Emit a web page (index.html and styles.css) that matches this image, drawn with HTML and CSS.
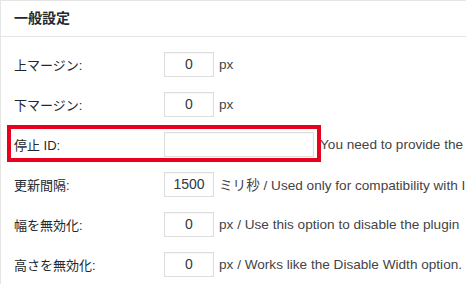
FILE: index.html
```html
<!DOCTYPE html>
<html lang="ja">
<head>
    <meta charset="UTF-8">
    <meta name="viewport" content="width=device-width, initial-scale=1.0">
    <title>一般設定</title>
    <link rel="stylesheet" href="styles.css">
</head>
<body>

<div class="postbox">
    <h2 class="postbox-title">一般設定</h2>

    <div class="form-table">
        <div class="form-row">
            <label class="form-label" for="marginTop">上マージン:</label>
            <input type="text" class="small-text" id="marginTop" value="0">
            <span class="description">px</span>
        </div>

        <div class="form-row">
            <label class="form-label" for="marginBottom">下マージン:</label>
            <input type="text" class="small-text" id="marginBottom" value="0">
            <span class="description">px</span>
        </div>

        <!-- Highlighted row -->
        <div class="form-row highlight">
            <label class="form-label" for="stopId">停止 ID:</label>
            <input type="text" class="regular-text" id="stopId" value="">
            <span class="description">You need to provide the</span>
        </div>

        <div class="form-row">
            <label class="form-label" for="interval">更新間隔:</label>
            <input type="text" class="small-text" id="interval" value="1500">
            <span class="description">ミリ秒 / Used only for compatibility with IE</span>
        </div>

        <div class="form-row">
            <label class="form-label" for="disableWidth">幅を無効化:</label>
            <input type="text" class="small-text" id="disableWidth" value="0">
            <span class="description">px / Use this option to disable the plugin</span>
        </div>

        <div class="form-row">
            <label class="form-label" for="disableHeight">高さを無効化:</label>
            <input type="text" class="small-text" id="disableHeight" value="0">
            <span class="description">px / Works like the Disable Width option.</span>
        </div>
    </div>
</div>

</body>
</html>
```

FILE: styles.css
```css
* {
    box-sizing: border-box;
}
body {
    margin: 0;
    padding: 0;
    background-color: #ffffff;
    font-family: "Liberation Sans", "Noto Sans CJK JP", sans-serif;
    color: #32373c;
    overflow: hidden;
}
.postbox {
    width: 800px;
    border-top: 1px solid #e5e5e5;
    border-left: 1px solid #e5e5e5;
    background: white;
}
.postbox-title {
    margin: 0;
    height: 36px;
    padding: 0 13px;
    font-size: 14px;
    font-weight: bold;
    line-height: 35px;
    color: #23282d;
    border-bottom: 1px solid #e5e5e5;
}
.form-table {
    padding-top: 7px;
}
.form-row {
    position: relative;
    display: flex;
    align-items: center;
    height: 40px;
    padding-left: 13px;
    white-space: nowrap;
    font-size: 13px;
}
.form-label {
    width: 150px;
    flex-shrink: 0;
    color: #23282d;
}
input[type="text"] {
    height: 25px;
    padding: 0 4px;
    margin: 0;
    border: 1px solid #dddddd;
    border-radius: 0;
    font-family: "Liberation Sans", sans-serif;
    font-size: 14px;
    color: #32373c;
    background: #ffffff;
    box-shadow: inset 0 1px 2px rgba(0, 0, 0, 0.04);
}
.small-text {
    width: 50px;
    text-align: center;
}
.regular-text {
    width: 150px;
}
.description {
    margin-left: 5px;
    font-size: 13.6px;
    color: #444444;
}
.highlight .description {
    margin-left: 6px;
}
/* red annotation box drawn over the row */
.highlight::after {
    content: "";
    position: absolute;
    box-sizing: border-box;
    left: 6px;
    top: 1px;
    width: 314px;
    height: 37px;
    border: 4px solid #e8001c;
    pointer-events: none;
}
```
